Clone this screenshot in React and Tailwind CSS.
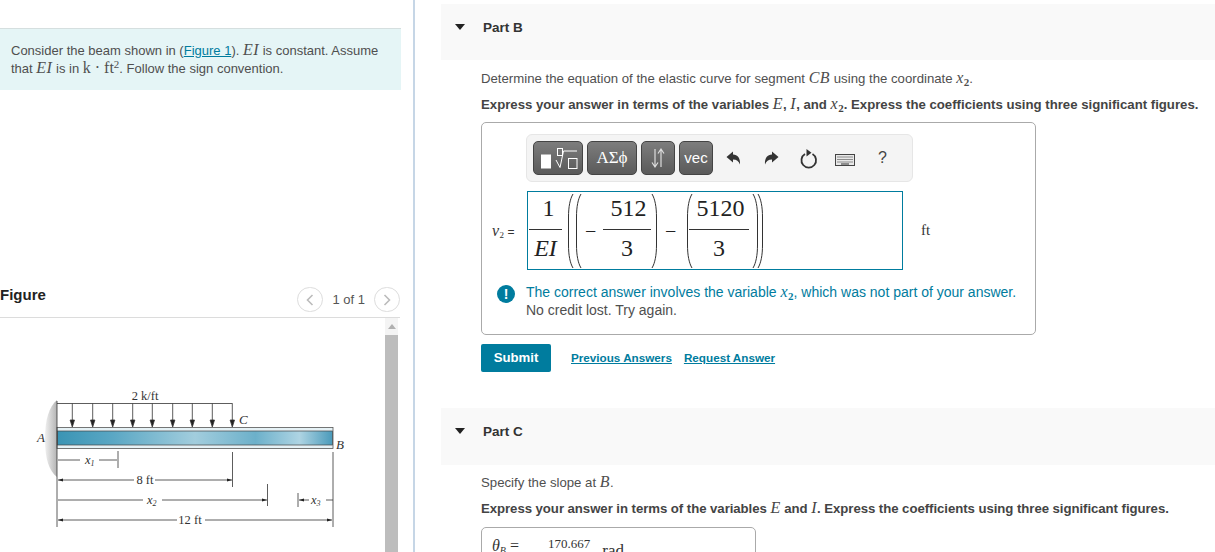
import { Fragment } from "react";

const arrowXs = [42.3, 62.7, 82.7, 102.7, 122.3, 142.7, 162.3, 182.3, 202.3];

function M({ children, className = "" }) {
  return <span className={`font-['Liberation_Serif'] italic text-[16px] tracking-[0.5px] ${className}`}>{children}</span>;
}

function Sub({ children }) {
  return <sub className="font-['Liberation_Serif'] text-[11px] font-bold">{children}</sub>;
}

function Paren({ side = "left", h = 76 }) {
  const d = side === "left"
    ? `M6 1 C3 6 1.5 14 1.5 24 V${h - 24} C1.5 ${h - 14} 3 ${h - 6} 6 ${h - 1}`
    : `M1 1 C4 6 5.5 14 5.5 24 V${h - 24} C5.5 ${h - 14} 4 ${h - 6} 1 ${h - 1}`;
  return (
    <svg width="7" height={h} viewBox={`0 0 7 ${h}`} className="shrink-0">
      <path d={d} fill="none" stroke="#333" strokeWidth="1" />
    </svg>
  );
}

function Frac({ top, bottom, w, topClass = "" }) {
  return (
    <div className={`flex shrink-0 flex-col items-center ${w}`}>
      <div className={`h-[36px] leading-[31px] text-center ${topClass}`}>{top}</div>
      <div className="h-px w-full bg-[#333]"></div>
      <div className="h-[38px] leading-[37px] text-center">{bottom}</div>
    </div>
  );
}

function ToolButton({ children, className = "" }) {
  return (
    <div className={`flex h-[34px] shrink-0 items-center justify-center rounded-[5px] border border-[#444] bg-gradient-to-b from-[#7d7d7d] to-[#5a5a5a] text-white ${className}`}>
      {children}
    </div>
  );
}

function ArrowIcon({ flip, className = "" }) {
  return (
    <svg width="15" height="14" viewBox="0 0 15 14" className={`shrink-0 ${className}`}>
      <g transform={flip ? "translate(15 0) scale(-1 1)" : undefined}>
        <path d="M0.5 6 L7 0.5 V3.6 C11.5 3.8 14.5 7 14 13.5 C12.6 10 10.8 8.4 7 8.4 V11.5 Z" fill="#333" />
      </g>
    </svg>
  );
}

function Beam() {
  return (
    <svg width="320" height="172" viewBox="0 0 320 172" className="ml-[30px] block font-['Liberation_Serif']">
      <defs>
        <linearGradient id="beamFill" x1="0" y1="0" x2="1" y2="0">
          <stop offset="0" stopColor="#3a94b4" />
          <stop offset="0.2" stopColor="#5aa7c4" />
          <stop offset="0.5" stopColor="#a2cddd" />
          <stop offset="0.72" stopColor="#6cb0ca" />
          <stop offset="0.88" stopColor="#aed4e3" />
          <stop offset="1" stopColor="#4a9aba" />
        </linearGradient>
        <linearGradient id="wallFill" x1="0" y1="0" x2="1" y2="0">
          <stop offset="0" stopColor="#f0f0f0" />
          <stop offset="1" stopColor="#b4b4b4" />
        </linearGradient>
        <marker id="tip" markerUnits="userSpaceOnUse" markerWidth="6" markerHeight="6" refX="5" refY="3" orient="auto-start-reverse">
          <path d="M0 1.4 L5 3 L0 4.6 Z" fill="#222" />
        </marker>
      </defs>
      <path d="M27 21 C19 28 15 40 15 60 C15 80 19 92 27 98 Z" fill="url(#wallFill)" />
      <g stroke="#333" strokeWidth="0.8" fill="none">
        <path d="M27 24.5 H202.5" />
        {arrowXs.map((x) => (
          <Fragment key={x}>
            <path d={`M${x} 24.5 V41`} />
            <path d={`M${x - 2.2} 41 L${x} 48 L${x + 2.2} 41 Z`} fill="#222" />
          </Fragment>
        ))}
      </g>
      <rect x="27" y="48.5" width="276" height="21" fill="#e6f2f6" stroke="#555" strokeWidth="0.8" />
      <rect x="27.5" y="52" width="275" height="14" fill="url(#beamFill)" stroke="#444" strokeWidth="0.7" />
      <g stroke="#333" strokeWidth="0.8" fill="none">
        <path d="M27 22 V148" />
        <path d="M303 73 V148" />
        <path d="M88 72 V89" />
        <path d="M202.5 73 V108" />
        <path d="M237.5 105 V127" />
        <path d="M268 114 V128" />
        <path d="M28 81 H50" />
        <path d="M69 81 H87" />
        <path d="M28 101 H104" markerStart="url(#tip)" />
        <path d="M125 101 H202" markerEnd="url(#tip)" />
        <path d="M28 121 H113" />
        <path d="M132 121 H237" markerEnd="url(#tip)" />
        <path d="M269 121 H279" markerStart="url(#tip)" />
        <path d="M296 121 H303" />
        <path d="M28 141 H147" markerStart="url(#tip)" />
        <path d="M175 141 H302" markerEnd="url(#tip)" />
      </g>
      <g fill="#333" fontSize="12.5">
        <text x="115" y="21" textAnchor="middle">2 k/ft</text>
        <text x="209" y="45" fontStyle="italic" fontSize="13">C</text>
        <text x="7" y="63" fontStyle="italic" fontSize="13">A</text>
        <text x="306" y="70" fontStyle="italic" fontSize="13">B</text>
        <text x="55" y="85" fontStyle="italic">x<tspan fontSize="8" dy="2">1</tspan></text>
        <text x="115" y="105" textAnchor="middle">8 ft</text>
        <text x="117" y="125" fontStyle="italic">x<tspan fontSize="8" dy="2">2</tspan></text>
        <text x="281" y="125" fontStyle="italic">x<tspan fontSize="8" dy="2">3</tspan></text>
        <text x="160" y="145" textAnchor="middle">12 ft</text>
      </g>
    </svg>
  );
}

export default function App() {
  return (
    <div className="flex h-[552px] w-[1215px] overflow-hidden bg-white font-['Liberation_Sans',sans-serif] text-[13.2px] text-[#4f4f4f]">
      <div className="w-[415px] shrink-0 border-r-2 border-[#c6d6e6] pt-[28px]">
        <div className="h-[62px] w-[401px] border-t border-[#d5dfdf] bg-[#e5f5f6] pl-[11px] pt-[12px] text-[13px] leading-[18px]">
          <div className="h-[18px] whitespace-nowrap">
            Consider the beam shown in (<a href="#" className="text-[#007c9e] underline">Figure 1</a>). <M>EI</M> is constant. Assume
          </div>
          <div className="h-[18px] whitespace-nowrap">
            that <M>EI</M> is in <span className="font-['Liberation_Serif'] text-[16px]">k · ft<sup className="text-[11px]">2</sup></span>. Follow the sign convention.
          </div>
        </div>
        <div className="mt-[196px] flex h-[32px] w-[400px] items-start justify-between border-b border-[#dcdcdc]">
          <span className="text-[15px] font-bold leading-[17px] text-[#222]">Figure</span>
          <div className="flex items-center gap-[9px] pt-[1px] text-[13px] text-[#555]">
            <div className="flex h-[25px] w-[26px] items-center justify-center rounded-full border border-[#ddd]">
              <svg width="8" height="12" viewBox="0 0 8 12"><path d="M6.5 1 L1.5 6 L6.5 11" fill="none" stroke="#bbb" strokeWidth="1.6" /></svg>
            </div>
            <span>1 of 1</span>
            <div className="flex h-[25px] w-[26px] items-center justify-center rounded-full border border-[#ddd]">
              <svg width="8" height="12" viewBox="0 0 8 12"><path d="M1.5 1 L6.5 6 L1.5 11" fill="none" stroke="#bbb" strokeWidth="1.6" /></svg>
            </div>
          </div>
        </div>
        <div className="relative h-[234px] w-[400px] pt-[61px]">
          <Beam />
          <div className="absolute right-[2px] top-0 flex h-full w-[13px] flex-col items-center bg-[#f4f4f4]">
            <div className="mt-[6px] h-0 w-0 border-x-[4px] border-b-[5px] border-x-transparent border-b-[#b0b0b0]"></div>
            <div className="mt-[6px] w-full flex-1 bg-[#bdbdbd]"></div>
          </div>
        </div>
      </div>

      <div className="flex-1 pl-[26px] pt-[4px]">
        <div className="flex h-[56px] items-start bg-[#f9f9f9] pt-[16px]">
          <div className="ml-[14px] mt-[4px] h-0 w-0 border-x-[5.5px] border-t-[6px] border-x-transparent border-t-[#222]"></div>
          <span className="ml-[18px] text-[13.5px] font-bold leading-[16px] text-[#333]">Part B</span>
        </div>
        <div className="pl-[40px]">
          <p className="mt-[9px] h-[18px] whitespace-nowrap leading-[18px]">
            Determine the equation of the elastic curve for segment <M>CB</M> using the coordinate <M>x</M><Sub>2</Sub>.
          </p>
          <p className="mt-[8px] h-[18px] whitespace-nowrap font-bold leading-[18px] text-[#444]">
            Express your answer in terms of the variables <M className="font-normal">E</M>, <M className="font-normal">I</M>, and <M className="font-normal">x</M><Sub>2</Sub>. Express the coefficients using three significant figures.
          </p>

          <div className="mt-[9px] h-[213px] w-[555px] rounded-[5px] border border-[#aaa] pl-[44px] pt-[11px]">
            <div className="flex h-[48px] w-[387px] items-center gap-[4px] rounded-[6px] border border-[#e6e6e6] bg-[#f4f4f4] pl-[6px]">
              <ToolButton className="w-[50px]">
                <svg width="40" height="26" viewBox="0 0 40 26">
                  <rect x="3" y="9.5" width="10" height="14" fill="#fff" />
                  <rect x="19.5" y="3.5" width="5" height="7" fill="none" stroke="#fff" />
                  <path d="M18 15 L22 22.5 L25.5 6 H39" fill="none" stroke="#fff" />
                  <rect x="30.5" y="13.5" width="8.5" height="10" fill="none" stroke="#fff" />
                </svg>
              </ToolButton>
              <ToolButton className="w-[50px] font-['Liberation_Serif'] text-[17px]">ΑΣϕ</ToolButton>
              <ToolButton className="w-[34px]">
                <svg width="16" height="22" viewBox="0 0 16 22">
                  <path d="M5 2 V19 M2 15.5 L5 20 L8 15.5" fill="none" stroke="#ddd" strokeWidth="1.2" />
                  <path d="M11 20 V3 M8 6.5 L11 2 L14 6.5" fill="none" stroke="#ddd" strokeWidth="1.2" />
                </svg>
              </ToolButton>
              <ToolButton className="w-[34px] text-[15px]">vec</ToolButton>
              <ArrowIcon className="ml-[9px]" />
              <ArrowIcon flip className="ml-[19px]" />
              <svg width="18" height="21" viewBox="0 0 18 21" className="ml-[17px] shrink-0">
                <path d="M5 6 A7.3 7.3 0 1 0 12.5 6" fill="none" stroke="#333" strokeWidth="1.8" />
                <path d="M6.5 1 L11.5 4.7 L6.5 8.5 Z" fill="#333" />
              </svg>
              <svg width="20" height="12" viewBox="0 0 20 12" className="ml-[13px] mt-[4px] shrink-0">
                <rect x="0.5" y="0.5" width="19" height="11" fill="#e8e8e8" stroke="#444" />
                <path d="M2.5 3 H17.5 M2.5 5.5 H17.5 M2.5 8 H17.5" stroke="#333" strokeDasharray="1 1" />
                <path d="M6 10 H14" stroke="#333" />
              </svg>
              <span className="ml-[19px] text-[16px] text-[#444]">?</span>
            </div>

            <div className="ml-[-34px] mt-[9px] flex items-center">
              <span className="w-[35px] shrink-0 whitespace-nowrap text-[12px] text-[#333]">
                <M className="text-[13px]">v</M><sub className="font-['Liberation_Serif'] text-[9px]">2</sub> =
              </span>
              <div className="flex h-[79px] w-[376px] shrink-0 items-center border border-[#007c9e] pl-[1px] font-['Liberation_Serif'] text-[24px] text-[#222]">
                <Frac top="1" bottom={<span className="italic">EI</span>} w="w-[33px] mr-[5px]" topClass="pl-[6px]" />
                <Paren />
                <span className="ml-[1px]"><Paren /></span>
                <span className="ml-[3px] w-[15px] shrink-0 text-[20px]">−</span>
                <Frac top="512" bottom="3" w="w-[48px] ml-[3px]" topClass="pl-[3px]" />
                <Paren side="right" />
                <span className="ml-[7px] w-[14px] shrink-0 text-[20px]">−</span>
                <span className="ml-[7px]"><Paren /></span>
                <Frac top="5120" bottom="3" w="w-[60px] ml-[-4px]" topClass="pl-[3px]" />
                <span className="ml-[3px]"><Paren side="right" /></span>
                <span className="ml-[-2px]"><Paren side="right" /></span>
              </div>
              <span className="ml-[18px] font-['Liberation_Serif'] text-[15px] text-[#333]">ft</span>
            </div>

            <div className="ml-[-29px] mt-[13px] flex">
              <div className="mt-[2px] flex h-[18px] w-[18px] shrink-0 items-center justify-center rounded-full bg-[#007c9e] text-[14px] font-bold text-white">!</div>
              <div className="ml-[11px] whitespace-nowrap text-[14px] leading-[18px]">
                <div className="h-[18px] text-[#007c9e]">The correct answer involves the variable <M>x</M><Sub>2</Sub>, which was not part of your answer.</div>
                <div>No credit lost. Try again.</div>
              </div>
            </div>
          </div>

          <div className="mt-[9px] flex h-[28px] items-center">
            <button className="h-[28px] w-[70px] rounded-[2px] bg-[#007c9e] text-[13.2px] font-bold text-white">Submit</button>
            <a href="#" className="ml-[20px] text-[11.7px] font-bold text-[#007c9e] underline">Previous Answers</a>
            <a href="#" className="ml-[12px] text-[11.7px] font-bold text-[#007c9e] underline">Request Answer</a>
          </div>
        </div>

        <div className="mt-[36px] flex h-[57px] items-start bg-[#f9f9f9] pt-[16px]">
          <div className="ml-[14px] mt-[4px] h-0 w-0 border-x-[5.5px] border-t-[6px] border-x-transparent border-t-[#222]"></div>
          <span className="ml-[18px] text-[13.5px] font-bold leading-[16px] text-[#333]">Part C</span>
        </div>
        <div className="pl-[40px]">
          <p className="mt-[8px] h-[18px] leading-[18px]">Specify the slope at <M>B</M>.</p>
          <p className="mt-[8px] h-[18px] whitespace-nowrap font-bold leading-[18px] tracking-[-0.05px] text-[#444]">
            Express your answer in terms of the variables <M className="font-normal">E</M> and <M className="font-normal">I</M>. Express the coefficients using three significant figures.
          </p>
          <div className="mt-[10px] flex h-[60px] w-[275px] items-start rounded-[5px] border border-[#aaa] pl-[10px] font-['Liberation_Serif'] text-[#333]">
            <span className="mt-[9px] w-[56px] shrink-0 text-[16px] italic leading-[18px]">θ<sub className="text-[10px]">B</sub> <span className="not-italic">=</span></span>
            <span className="mt-[9px] text-[13px] leading-[14px]">170.667</span>
            <span className="ml-[12px] mt-[14px] text-[17px] leading-[18px]">rad</span>
          </div>
        </div>
      </div>
    </div>
  );
}
